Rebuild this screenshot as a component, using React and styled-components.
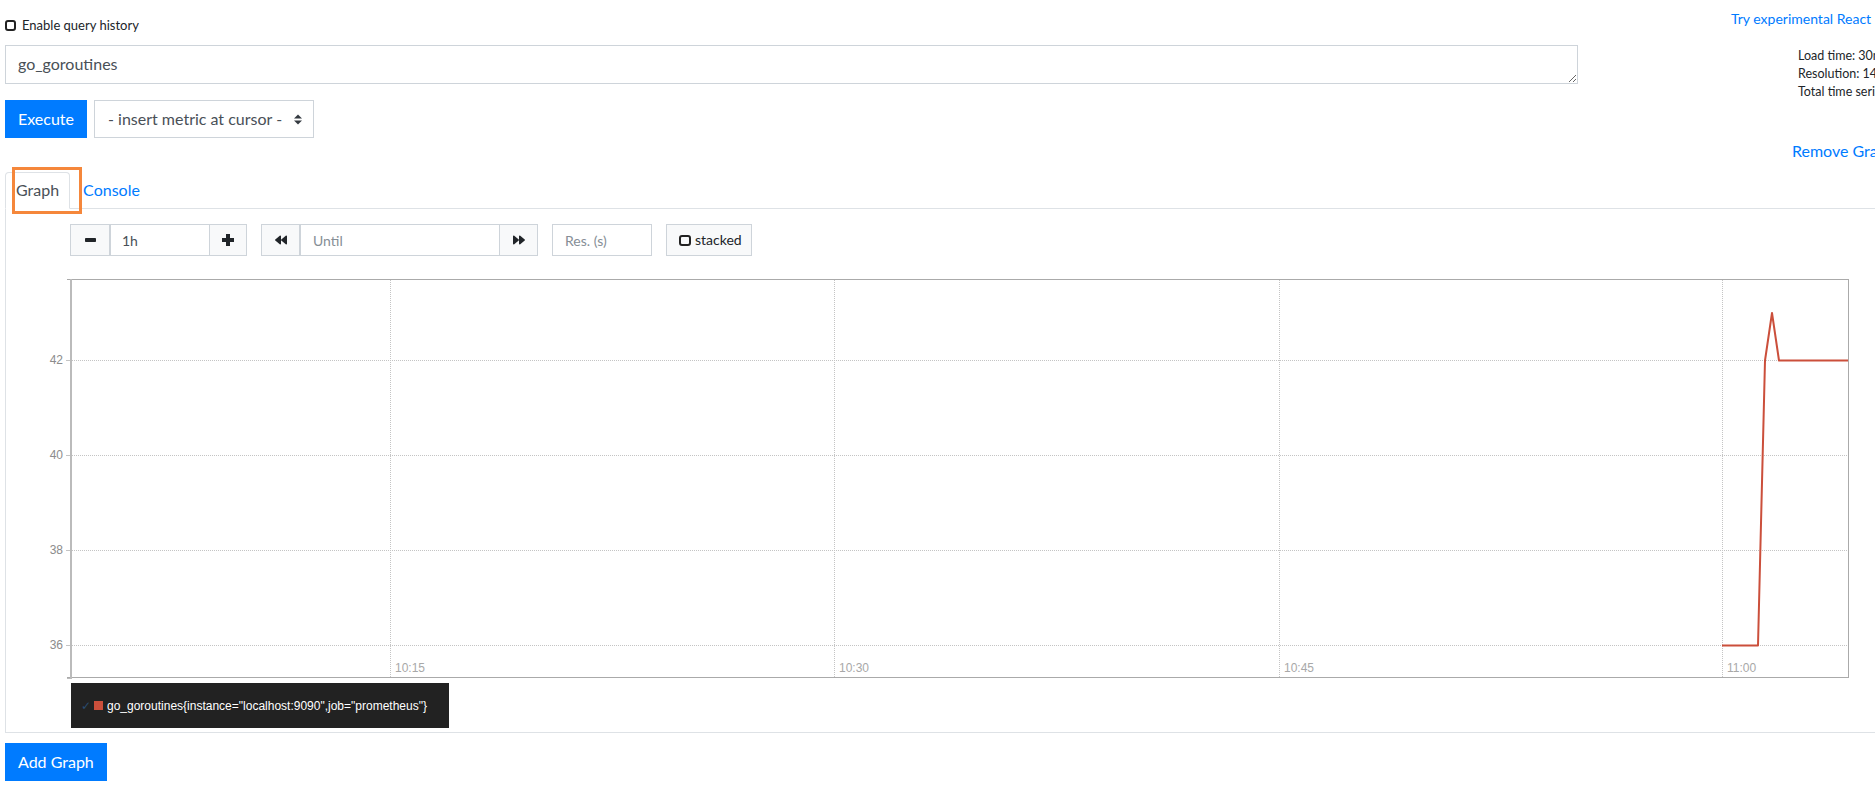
import React from 'react';
import styled, { createGlobalStyle } from 'styled-components';
import { FaBackward, FaForward } from 'react-icons/fa';

const GlobalStyle = createGlobalStyle`
  html, body { margin: 0; padding: 0; overflow: hidden; background: #fff; }
  body {
    font-family: Lato, "Noto Sans", "Liberation Sans", sans-serif;
    color: #212529;
    font-size: 16px;
    line-height: 1.5;
  }
  *, *::before, *::after { box-sizing: border-box; }
`;

const Page = styled.div`
  width: 2140px;
  padding-left: 5px;
`;

const Header = styled.div`
  display: grid;
  grid-template-columns: 1573px 1fr;
  align-items: start;
`;

const HistoryToggle = styled.label`
  display: flex;
  align-items: center;
  gap: 6px;
  height: 18px;
  margin: 16px 0 11px;
  font-size: 13px;
  line-height: 18px;
`;

const CheckBox = styled.span`
  flex: none;
  width: ${(p) => p.$w || 11}px;
  height: ${(p) => p.$h || 11}px;
  border: 2px solid #222;
  border-radius: 3px;
  background: transparent;
`;

const Link = styled.a`
  display: block;
  color: #007bff;
  text-decoration: none;
  white-space: nowrap;
  font-size: ${(p) => p.$size || 16}px;
  line-height: ${(p) => p.$lh || 24}px;
  margin-left: ${(p) => p.$left}px;
  margin-top: ${(p) => p.$top || 0}px;
`;

const QueryCol = styled.div`
  display: flex;
  flex-direction: column;
`;

const QueryArea = styled.textarea`
  display: block;
  width: 100%;
  height: 39px;
  margin: 0;
  border: 1px solid #ced4da;
  border-radius: 0;
  padding: 6px 12px;
  font-family: inherit;
  font-size: 16px;
  line-height: 24px;
  color: #495057;
  resize: both;
  overflow: hidden;
`;

const ExecuteRow = styled.div`
  display: flex;
  gap: 7px;
  margin-top: 16px;
`;

const PrimaryButton = styled.button`
  font-family: inherit;
  font-size: 16px;
  line-height: 24px;
  padding: 6px 12px;
  color: #fff;
  background: #007bff;
  border: 1px solid #007bff;
  border-radius: 0;
  cursor: pointer;
  margin-top: ${(p) => p.$top || 0}px;
`;

const MetricSelect = styled.div`
  width: 220px;
  height: 38px;
  display: flex;
  align-items: center;
  justify-content: space-between;
  padding: 6px 11px 6px 13px;
  border: 1px solid #ced4da;
  color: #495057;
  font-size: 16px;
  line-height: 24px;
`;

const Stats = styled.div`
  margin-left: 220px;
  margin-top: 2px;
  font-size: 12.5px;
  line-height: 18px;
  white-space: nowrap;
`;

const Panel = styled.div`
  margin-top: 9px;
`;

const Tabs = styled.div`
  position: relative;
  display: flex;
  border-bottom: 1px solid #dee2e6;
`;

const Tab = styled.div`
  padding: 5px ${(p) => (p.$active ? 10 : 12)}px 6px;
  border: 1px solid ${(p) => (p.$active ? '#dee2e6' : 'transparent')};
  border-bottom-color: ${(p) => (p.$active ? '#fff' : 'transparent')};
  border-radius: 4px 4px 0 0;
  margin-bottom: -1px;
  background: ${(p) => (p.$active ? '#fff' : 'transparent')};
  color: ${(p) => (p.$active ? '#495057' : '#007bff')};
  font-size: 16px;
  line-height: 24px;
`;

const Highlight = styled.div`
  position: absolute;
  left: 7px;
  top: -5px;
  width: 70px;
  height: 47px;
  border: 3px solid #f5873b;
  pointer-events: none;
`;

const TabContent = styled.div`
  border: 1px solid #dee2e6;
  border-top: none;
  padding: 15px 0 4px;
`;

const Controls = styled.div`
  display: flex;
  gap: 14px;
  margin-left: 64px;
  height: 32px;
`;

const InputGroup = styled.div`
  display: flex;
  & > * + * { margin-left: -1px; }
`;

const GroupButton = styled.div`
  width: ${(p) => p.$w}px;
  height: 32px;
  display: flex;
  align-items: center;
  gap: 4px;
  padding: ${(p) => (p.$pad ? '0 12px' : '0')};
  justify-content: ${(p) => (p.$pad ? 'flex-start' : 'center')};
  background: #f8f9fa;
  border: 1px solid #ced4da;
  color: #212529;
  font-size: 14px;
  line-height: 20px;
`;

const GroupInput = styled.input`
  width: ${(p) => p.$w}px;
  height: 32px;
  margin: 0;
  padding: 4px ${(p) => p.$pl || 12}px;
  border: 1px solid #ced4da;
  border-radius: 0;
  font-family: inherit;
  font-size: 14px;
  color: #495057;
  outline: none;
  &::placeholder { color: #868e96; }
`;

const ChartSvg = styled.svg`
  display: block;
  margin: 13px 0 0 34px;
`;

const Legend = styled.div`
  width: 378px;
  height: 45px;
  margin: 2px 0 0 65px;
  padding-left: 10px;
  display: flex;
  align-items: center;
  background: #222;
  color: #fff;
  font-family: "Liberation Sans", Arial, sans-serif;
  font-size: 12px;
  line-height: 14px;
  white-space: nowrap;
`;

const LegendCheck = styled.span`
  width: 13px;
  color: #2a4d72;
  font-family: "DejaVu Sans", sans-serif;
  font-size: 12px;
`;

const Swatch = styled.span`
  width: 9px;
  height: 9px;
  margin-right: 4px;
  background: #cb4f3b;
`;

const SelectArrows = () => (
  <svg width="8" height="11" viewBox="0 0 4 5">
    <path fill="#343a40" d="M2 0L0 2h4zm0 5L0 3h4z" />
  </svg>
);

const MinusIcon = () => (
  <svg width="11" height="4" viewBox="0 0 11 4">
    <rect width="11" height="4" rx="0.8" fill="#212529" />
  </svg>
);

const PlusIcon = () => (
  <svg width="12" height="12" viewBox="0 0 12 12">
    <path d="M4 0h4v4h4v4H8v4H4V8H0V4h4z" fill="#212529" />
  </svg>
);

const yTicks = [
  { v: '42', y: 359 },
  { v: '40', y: 454 },
  { v: '38', y: 549 },
  { v: '36', y: 644 },
];
const xTicks = [
  { t: '10:15', x: 390 },
  { t: '10:30', x: 834 },
  { t: '10:45', x: 1279 },
  { t: '11:00', x: 1722 },
];

const Chart = () => (
  <ChartSvg width="1820" height="412" viewBox="40 268 1820 412">
    {yTicks.map((t) => (
      <g key={t.v}>
        <line x1="72" x2="1848" y1={t.y + 0.5} y2={t.y + 0.5} stroke="#c4c4c4" strokeDasharray="1 1" />
        <line x1="66" x2="71" y1={t.y + 0.5} y2={t.y + 0.5} stroke="#c4c4c4" />
        <text x="63" y={t.y + 4} textAnchor="end" fill="#8c8c8c" fontSize="12" fontFamily="Liberation Sans, Arial, sans-serif">{t.v}</text>
      </g>
    ))}
    {xTicks.map((t) => (
      <g key={t.t}>
        <line x1={t.x + 0.5} x2={t.x + 0.5} y1="279" y2="676" stroke="#c4c4c4" strokeDasharray="1 1" />
        <text x={t.x + 5} y="671" fill="#a8a8a8" fontSize="12" fontFamily="Liberation Sans, Arial, sans-serif">{t.t}</text>
      </g>
    ))}
    <line x1="67" x2="1849" y1="278.5" y2="278.5" stroke="#aaa" />
    <line x1="1848.5" x2="1848.5" y1="278" y2="677" stroke="#aaa" />
    <line x1="67" x2="1849" y1="676.5" y2="676.5" stroke="#aaa" />
    <line x1="71" x2="71" y1="278" y2="678" stroke="#bbb" strokeWidth="2" />
    <line x1="67" x2="71" y1="677.5" y2="677.5" stroke="#bbb" />
    <path
      d="M1722 644.5 L1758 644.5 L1765 359.5 L1772 312 L1779 359.5 L1848 359.5"
      fill="none"
      stroke="#cb4f3b"
      strokeWidth="2"
      strokeLinejoin="round"
    />
  </ChartSvg>
);

export default function App() {
  return (
    <>
      <GlobalStyle />
      <Page>
        <Header>
          <HistoryToggle>
            <CheckBox />
            Enable query history
          </HistoryToggle>
          <Link href="#" $left={153} $top={8} $size={14} $lh={21}>
            Try experimental React UI
          </Link>

          <QueryCol>
            <QueryArea defaultValue="go_goroutines" spellCheck={false} />
            <ExecuteRow>
              <PrimaryButton>Execute</PrimaryButton>
              <MetricSelect>
                <span>- insert metric at cursor -</span>
                <SelectArrows />
              </MetricSelect>
            </ExecuteRow>
          </QueryCol>
          <Stats>
            <div>Load time: 30ms</div>
            <div>Resolution: 14s</div>
            <div>Total time series: 1</div>
          </Stats>

          <div />
          <Link href="#" $left={214} $top={1}>
            Remove Graph
          </Link>
        </Header>

        <Panel>
          <Tabs>
            <Tab $active>Graph</Tab>
            <Tab>Console</Tab>
            <Highlight />
          </Tabs>
          <TabContent>
            <Controls>
              <InputGroup>
                <GroupButton $w={40}><MinusIcon /></GroupButton>
                <GroupInput $w={100} $pl={11} defaultValue="1h" />
                <GroupButton $w={38}><PlusIcon /></GroupButton>
              </InputGroup>
              <InputGroup>
                <GroupButton $w={39}><FaBackward size={12} /></GroupButton>
                <GroupInput $w={200} placeholder="Until" />
                <GroupButton $w={39}><FaForward size={12} /></GroupButton>
              </InputGroup>
              <GroupInput $w={100} placeholder="Res. (s)" />
              <GroupButton $w={86} $pad>
                <CheckBox $w={12} $h={11} />
                stacked
              </GroupButton>
            </Controls>
            <Chart />
            <Legend>
              <LegendCheck>✓</LegendCheck>
              <Swatch />
              go_goroutines{'{'}instance="localhost:9090",job="prometheus"{'}'}
            </Legend>
          </TabContent>
          <PrimaryButton $top={10}>Add Graph</PrimaryButton>
        </Panel>
      </Page>
    </>
  );
}
